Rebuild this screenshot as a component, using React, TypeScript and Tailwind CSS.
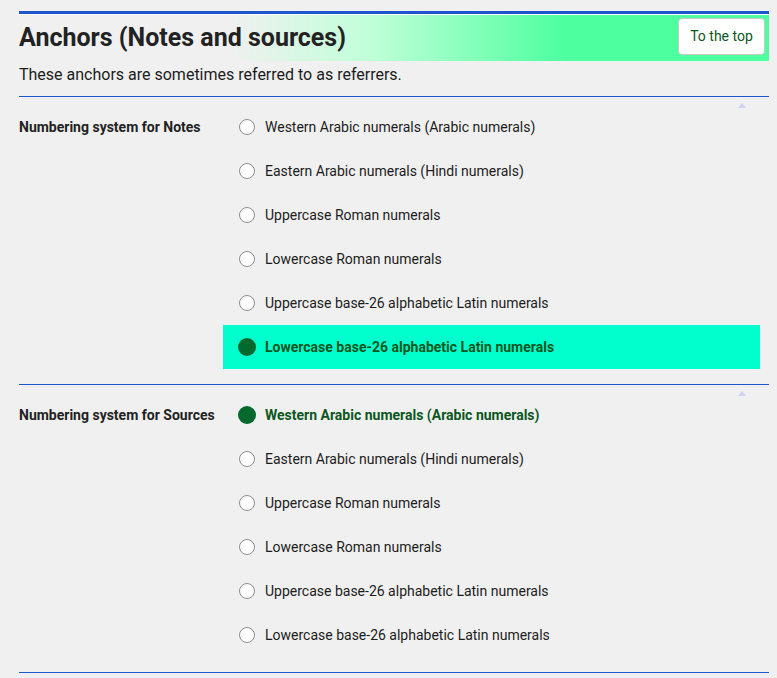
const options = [
  'Western Arabic numerals (Arabic numerals)',
  'Eastern Arabic numerals (Hindi numerals)',
  'Uppercase Roman numerals',
  'Lowercase Roman numerals',
  'Uppercase base-26 alphabetic Latin numerals',
  'Lowercase base-26 alphabetic Latin numerals',
]

function Radio({ checked }: { checked: boolean }) {
  if (checked) {
    return <span className="w-[18px] h-[18px] rounded-full bg-[#04692c] shrink-0 -ml-[1px] -mr-[1px]" />
  }
  return <span className="w-4 h-4 rounded-full bg-white border border-[#8f8f8f] shrink-0" />
}

function Group({ label, selected, highlight }: { label: string; selected: number; highlight: boolean }) {
  return (
    <section className="relative flex border-t border-[#1c55cc] pt-2 pb-[15px]">
      <span className="absolute right-[23px] top-[6px] w-0 h-0 border-x-[4px] border-x-transparent border-b-[5px] border-b-[#cfd3f3]" />
      <div className="w-[204px] shrink-0 h-11 flex items-center text-[14px] font-bold text-[#222]">{label}</div>
      <div className="flex-1 mr-[9px]">
        {options.map((o, i) => {
          const on = i === selected
          return (
            <label
              key={o}
              className={`h-11 flex items-center gap-[10px] pl-4 text-[14px] ${on && highlight ? 'bg-[#00ffcc]' : ''} ${on ? 'font-bold text-[#0b5620]' : 'text-[#1c1c1c]'}`}
            >
              <Radio checked={on} />
              <span>{o}</span>
            </label>
          )
        })}
      </div>
    </section>
  )
}

export default function App() {
  return (
    <div className="min-h-[678px] bg-[#f0f0f0] font-['Roboto',sans-serif] pt-[11px]">
      <div className="ml-[19px] w-[750px]">
        <div className="border-t-[3px] border-[#1c55cc] pt-[1px] bg-white">
          <div className="h-[46px] flex items-center justify-between bg-[#f0f0f0]">
            <div className="w-full h-full flex items-center justify-between bg-[linear-gradient(to_right,transparent_28%,#c0ffd8_47%,#4dff9f_73%)]">
              <h2 className="text-[25px] font-bold text-[#222] leading-none -mt-[1px]">Anchors (Notes and sources)</h2>
              <button className="self-start mt-[3px] mr-1 h-[37px] w-[87px] bg-white border border-[#c8c8c8] rounded text-[14px] text-[#0b5620]">To the top</button>
            </div>
          </div>
        </div>
        <p className="text-[16px] leading-6 text-[#1c1c1c] h-[35px] pt-[2px]">These anchors are sometimes referred to as referrers.</p>
        <Group label="Numbering system for Notes" selected={5} highlight />
        <Group label="Numbering system for Sources" selected={0} highlight={false} />
        <div className="border-t border-[#1c55cc]" />
      </div>
    </div>
  )
}
